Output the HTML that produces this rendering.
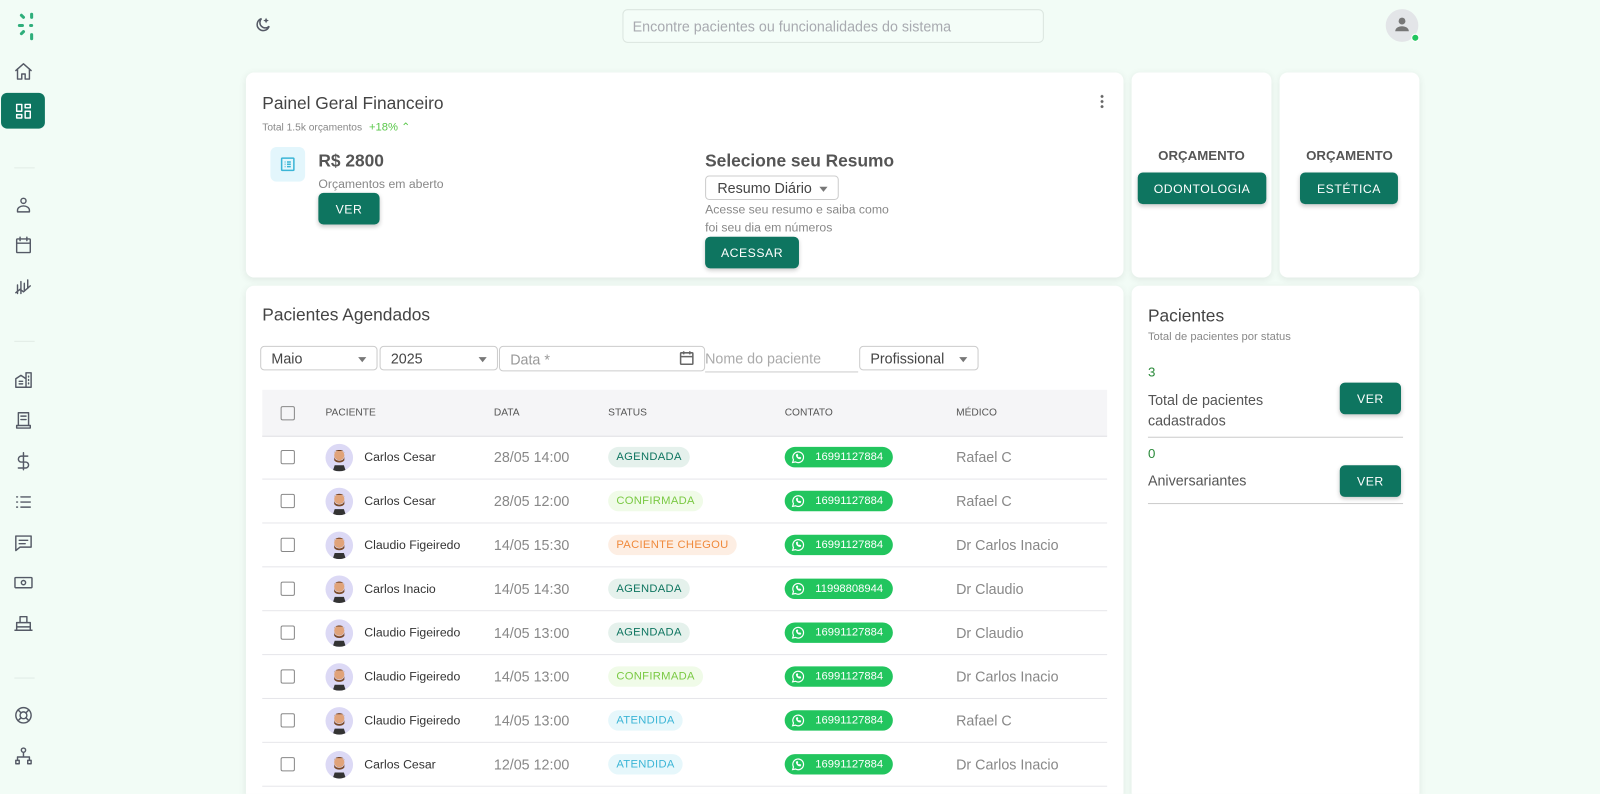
<!DOCTYPE html><html><head><meta charset="utf-8"><style>
*{box-sizing:border-box;margin:0;padding:0}
html,body{width:1600px;height:794px;overflow:hidden;background:#f2fcf6}
#w{position:absolute;left:0;top:0;width:1568px;height:778px;overflow:hidden;transform:scale(1.0204);transform-origin:0 0;font-family:"Liberation Sans",sans-serif;color:#4b4f5c}
.ab{position:absolute}
.card{position:absolute;background:#fff;border-radius:8px;box-shadow:0 2px 8px rgba(0,0,0,.08)}
.btn{position:absolute;background:#0e7560;color:#fff;font-size:12px;letter-spacing:.5px;border-radius:5px;display:flex;align-items:center;justify-content:center;box-shadow:0 2px 4px rgba(0,0,0,.2)}
.ic{position:absolute;left:13px;width:20px;height:20px;fill:none;stroke:#555a66;stroke-width:1.7;stroke-linecap:round;stroke-linejoin:round}
.row{position:absolute;left:257px;width:828px;height:43px;border-bottom:1px solid #e6e6ea;font-size:12px}
.row>*{position:absolute}
.cb{left:18px;top:14px;width:14px;height:14px;border:1.5px solid #888;border-radius:2px}
.av{left:62px;top:8px;width:27px;height:27px;border-radius:50%;background:#dcd9f5;overflow:hidden}
.nm{left:100px;top:14px;color:#333}
.dt{left:227px;top:13px;color:#888;font-size:14px}
.st{left:339px;top:11px;height:20px;padding:0 8px;border-radius:10px;font-size:11px;line-height:20px;letter-spacing:.3px}
.wa{left:512px;top:11px;height:20px;padding:0 10px 0 6px;border-radius:10px;background:#22c55e;color:#fff;font-size:11px;line-height:20px;display:flex;align-items:center;gap:10px}
.md{left:680px;top:13px;color:#888;font-size:14px}
.ag{background:#e5f1ec;color:#0e7560}.cf{background:#f0fbe8;color:#7ac943}.pc{background:#fdeee3;color:#f08a3c}.at{background:#e6f7fb;color:#3bb5d6}
.sel{position:absolute;height:24px;border:1px solid #ccc;border-radius:4px;font-size:14px;padding:3px 10px;color:#444}
.sel:after{content:"";position:absolute;right:10px;top:10px;border:4px solid transparent;border-top:5px solid #777}
</style></head><body><div id="w">
<svg class="ab" style="left:16px;top:12px" width="20" height="28" viewBox="0 0 20 28"><g stroke="#2fae7b" stroke-width="3" stroke-linecap="round"><line x1="15" y1="2" x2="15" y2="5"/><line x1="5" y1="3" x2="7" y2="5"/><line x1="3" y1="13" x2="6" y2="13"/><line x1="14" y1="13" x2="15" y2="13"/><line x1="5" y1="21" x2="7" y2="19"/><line x1="15" y1="22" x2="15" y2="26"/></g></svg>
<svg class="ic" style="top:60px" viewBox="0 0 24 24"><path d="M3 11l9-8 9 8M5 9v12h5v-6h4v6h5V9"/></svg>
<div class="ab" style="left:1px;top:91px;width:43px;height:35px;background:#0e7560;border-radius:6px"></div>
<svg class="ic" style="top:99px;stroke:#fff" viewBox="0 0 24 24"><rect x="4" y="4" width="6" height="8"/><rect x="14" y="4" width="6" height="4"/><rect x="4" y="16" width="6" height="4"/><rect x="14" y="12" width="6" height="8"/></svg>
<div class="ab" style="left:14px;top:164px;width:20px;height:1px;background:#e2ece6"></div>
<svg class="ic" style="top:191px" viewBox="0 0 24 24"><circle cx="12" cy="7" r="3"/><path d="M5 20v-2a7 5 0 0 1 14 0v2z"/></svg>
<svg class="ic" style="top:230px" viewBox="0 0 24 24"><rect x="4" y="5" width="16" height="16" rx="1"/><path d="M4 10h16M8 3v4M16 3v4"/></svg>
<svg class="ic" style="top:271px" viewBox="0 0 24 24"><path d="M5 20V10M9 20V6M13 17V8M17 14V4M3 19l5-4 4 3 8-7"/></svg>
<div class="ab" style="left:14px;top:334px;width:20px;height:1px;background:#e2ece6"></div>
<svg class="ic" style="top:362px" viewBox="0 0 24 24"><path d="M3 21V11l6-4 6 4v10M15 21V4h6v17M3 21h18M7 14h4M7 17h4M18 8v1M18 12v1M18 16v1"/></svg>
<svg class="ic" style="top:402px" viewBox="0 0 24 24"><path d="M6 3h12v15H6zM4 18h16v3H4zM9 7h6M9 11h6"/></svg>
<svg class="ic" style="top:442px" viewBox="0 0 24 24"><path d="M12 2v20M17 6H9.5a3.5 3.5 0 0 0 0 7h5a3.5 3.5 0 0 1 0 7H6"/></svg>
<svg class="ic" style="top:482px" viewBox="0 0 24 24"><path d="M9 6h11M9 12h11M9 18h11M4 6h1M4 12h1M4 18h1"/></svg>
<svg class="ic" style="top:522px" viewBox="0 0 24 24"><path d="M3 4h18v13H8l-5 4zM7 9h10M7 13h7"/></svg>
<svg class="ic" style="top:561px" viewBox="0 0 24 24"><rect x="2" y="6" width="20" height="12" rx="1"/><circle cx="12" cy="12" r="2.5"/></svg>
<svg class="ic" style="top:601px" viewBox="0 0 24 24"><path d="M2 20h20M4 20V11h16v9M8 11V4h8v7M4 16h16"/></svg>
<div class="ab" style="left:14px;top:664px;width:20px;height:1px;background:#e2ece6"></div>
<svg class="ic" style="top:691px" viewBox="0 0 24 24"><circle cx="12" cy="12" r="9"/><circle cx="12" cy="12" r="4"/><path d="M5.6 5.6l3.6 3.6M18.4 5.6l-3.6 3.6M5.6 18.4l3.6-3.6M18.4 18.4l-3.6-3.6"/></svg>
<svg class="ic" style="top:731px" viewBox="0 0 24 24"><circle cx="12" cy="5" r="2.5"/><path d="M12 8v5M5 13h14M5 13v4M19 13v4M3 17h4v4H3zM17 17h4v4h-4z"/></svg>
<svg class="ab" style="left:248px;top:16px" width="18" height="18" viewBox="0 0 24 24" fill="none" stroke="#555a66" stroke-width="2" stroke-linecap="round"><path d="M11 3a8 8 0 1 0 10 10A7 7 0 0 1 11 3z"/><path d="M17 3l.8 1.7 1.7.8-1.7.8L17 8l-.8-1.7-1.7-.8 1.7-.8z" fill="#555a66" stroke-width="1"/></svg>
<div class="ab" style="left:610px;top:9px;width:413px;height:33px;border:1px solid #dbe5df;border-radius:5px;background:#f4fdf8;font-size:14px;color:#a8aab0;padding:8px 9px">Encontre pacientes ou funcionalidades do sistema</div>
<div class="ab" style="left:1358px;top:9px;width:32px;height:32px;border-radius:50%;background:#e3e5e8"></div>
<svg class="ab" style="left:1364px;top:14px" width="20" height="20" viewBox="0 0 24 24" fill="#777"><circle cx="12" cy="8" r="4"/><path d="M4 20c0-4 4-6 8-6s8 2 8 6z"/></svg>
<div class="ab" style="left:1383px;top:33px;width:8px;height:8px;border-radius:50%;background:#22c55e;border:1px solid #fff"></div>
<div class="card" style="left:241px;top:71px;width:860px;height:201px"></div>
<div class="ab" style="left:257px;top:92px;font-size:17px;color:#444">Painel Geral Financeiro</div>
<div class="ab" style="left:257px;top:118px;font-size:10px;color:#888">Total 1.5k orçamentos <span style="color:#59c749;font-size:11px;margin-left:4px">+18% ⌃</span></div>
<div class="ab" style="left:1078px;top:92px;width:4px;height:14px;background:radial-gradient(circle,#666 1.3px,transparent 1.6px) 0 0/4px 5px"></div>
<div class="ab" style="left:265px;top:144px;width:34px;height:34px;border-radius:6px;background:#e3f6fc"></div>
<svg class="ab" style="left:273px;top:152px" width="18" height="18" viewBox="0 0 24 24" fill="none" stroke="#3bb5d6" stroke-width="2"><rect x="4" y="4" width="16" height="16" rx="1"/><path d="M8 9h1M11 9h5M8 12h1M11 12h5M8 15h1M11 15h5"/></svg>
<div class="ab" style="left:312px;top:148px;font-size:17px;font-weight:bold;color:#555">R$ 2800</div>
<div class="ab" style="left:312px;top:173px;font-size:12px;color:#888">Orçamentos em aberto</div>
<div class="btn" style="left:312px;top:189px;width:60px;height:31px">VER</div>
<div class="ab" style="left:691px;top:148px;font-size:17px;font-weight:bold;color:#555">Selecione seu Resumo</div>
<div class="sel" style="left:691px;top:172px;width:131px;padding-left:11px">Resumo Diário</div>
<div class="ab" style="left:691px;top:196px;font-size:12px;color:#888;line-height:18px">Acesse seu resumo e saiba como<br>foi seu dia em números</div>
<div class="btn" style="left:691px;top:232px;width:92px;height:31px">ACESSAR</div>
<div class="card" style="left:1109px;top:71px;width:137px;height:201px"></div>
<div class="ab" style="left:1109px;top:145px;width:137px;text-align:center;font-size:13px;font-weight:bold;color:#555">ORÇAMENTO</div>
<div class="btn" style="left:1115px;top:169px;width:126px;height:31px">ODONTOLOGIA</div>
<div class="card" style="left:1254px;top:71px;width:137px;height:201px"></div>
<div class="ab" style="left:1254px;top:145px;width:137px;text-align:center;font-size:13px;font-weight:bold;color:#555">ORÇAMENTO</div>
<div class="btn" style="left:1274px;top:169px;width:96px;height:31px">ESTÉTICA</div>
<div class="card" style="left:241px;top:280px;width:860px;height:520px"></div>
<div class="ab" style="left:257px;top:299px;font-size:17px;color:#444">Pacientes Agendados</div>
<div class="sel" style="left:255px;top:339px;width:115px">Maio</div>
<div class="sel" style="left:372px;top:339px;width:116px">2025</div>
<div class="ab" style="left:489px;top:339px;width:202px;height:25px;border:1px solid #ccc;border-radius:4px;font-size:14px;color:#999;padding:4px 10px">Data *</div>
<svg class="ab" style="left:664px;top:342px" width="18" height="18" viewBox="0 0 24 24" fill="none" stroke="#666" stroke-width="2"><rect x="4" y="5" width="16" height="15" rx="1"/><path d="M4 10h16M8 3v4M16 3v4"/></svg>
<div class="ab" style="left:691px;top:343px;width:150px;height:22px;border-bottom:1px solid #ccc;font-size:14px;color:#aaa">Nome do paciente</div>
<div class="sel" style="left:842px;top:339px;width:117px">Profissional</div>
<div class="ab" style="left:257px;top:382px;width:828px;height:46px;background:#f5f5f7;border-bottom:1px solid #e0e0e4;font-size:10px;color:#555"><div class="ab cb" style="left:18px;top:16px"></div><span class="ab" style="left:62px;top:17px">PACIENTE</span><span class="ab" style="left:227px;top:17px">DATA</span><span class="ab" style="left:339px;top:17px">STATUS</span><span class="ab" style="left:512px;top:17px">CONTATO</span><span class="ab" style="left:680px;top:17px">MÉDICO</span></div>
<div id="rows"></div>
<div class="card" style="left:1109px;top:280px;width:282px;height:520px"></div>
<div class="ab" style="left:1125px;top:300px;font-size:17px;color:#444">Pacientes</div>
<div class="ab" style="left:1125px;top:324px;font-size:11px;color:#888">Total de pacientes por status</div>
<div class="ab" style="left:1125px;top:357px;font-size:13px;color:#2a8a3a">3</div>
<div class="ab" style="left:1125px;top:382px;font-size:14px;color:#555;line-height:20px">Total de pacientes<br>cadastrados</div>
<div class="btn" style="left:1313px;top:375px;width:60px;height:31px">VER</div>
<div class="ab" style="left:1125px;top:428px;width:250px;height:1px;background:#ccc"></div>
<div class="ab" style="left:1125px;top:437px;font-size:13px;color:#2a8a3a">0</div>
<div class="ab" style="left:1125px;top:463px;font-size:14px;color:#555">Aniversariantes</div>
<div class="btn" style="left:1313px;top:456px;width:60px;height:31px">VER</div>
<div class="ab" style="left:1125px;top:493px;width:250px;height:1px;background:#ccc"></div>
<div id="rows2"></div>
</div>
<script>
var d=[["Carlos Cesar","28/05 14:00","ag","AGENDADA","16991127884","Rafael C"],["Carlos Cesar","28/05 12:00","cf","CONFIRMADA","16991127884","Rafael C"],["Claudio Figeiredo","14/05 15:30","pc","PACIENTE CHEGOU","16991127884","Dr Carlos Inacio"],["Carlos Inacio","14/05 14:30","ag","AGENDADA","11998808944","Dr Claudio"],["Claudio Figeiredo","14/05 13:00","ag","AGENDADA","16991127884","Dr Claudio"],["Claudio Figeiredo","14/05 13:00","cf","CONFIRMADA","16991127884","Dr Carlos Inacio"],["Claudio Figeiredo","14/05 13:00","at","ATENDIDA","16991127884","Rafael C"],["Carlos Cesar","12/05 12:00","at","ATENDIDA","16991127884","Dr Carlos Inacio"]];
var wa='<svg width="14" height="14" viewBox="0 0 24 24" fill="none" stroke="#fff" stroke-width="2"><path d="M3 21l1.5-4.5A9 9 0 1 1 8 20z"/><path d="M9 8c0 4 3 7 7 7l1-2-2-1-1 1c-1-.5-2.5-2-3-3l1-1-1-2z" fill="#fff" stroke-width="1"/></svg>';
var av='<svg width="27" height="27" viewBox="0 0 27 27"><circle cx="13.5" cy="11" r="5" fill="#e0a37a"/><path d="M8.5 12c0 6 10 6 10 0v4c-2 3-8 3-10 0z" fill="#7a4a2a"/><path d="M8.5 9c0-4 10-4 10 0l-1-2h-8z" fill="#6a3a1a"/><path d="M7 27l2-6h9l2 6z" fill="#333"/></svg>';
var h='';d.forEach(function(r,i){h+='<div class="row" style="top:'+(427+i*43)+'px"><div class="cb"></div><div class="av">'+av+'</div><span class="nm">'+r[0]+'</span><span class="dt">'+r[1]+'</span><span class="st '+r[2]+'">'+r[3]+'</span><span class="wa">'+wa+r[4]+'</span><span class="md">'+r[5]+'</span></div>'});
document.getElementById('rows').innerHTML=h;
</script>
</body></html>
